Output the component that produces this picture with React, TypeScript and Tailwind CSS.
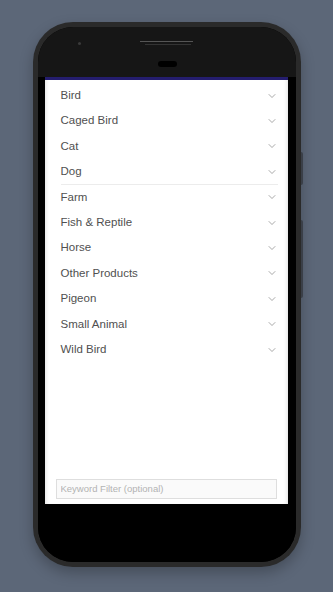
import { ChevronDown } from 'lucide-react'

const CATEGORIES = [
  'Bird',
  'Caged Bird',
  'Cat',
  'Dog',
  'Farm',
  'Fish & Reptile',
  'Horse',
  'Other Products',
  'Pigeon',
  'Small Animal',
  'Wild Bird',
]

function CategoryRow({ label, divider }: { label: string; divider?: boolean }) {
  return (
    <div className="relative flex h-[25.4px] items-center justify-between pl-[16px] pr-[10px]">
      <span className="text-[11.5px] text-[#505050]">{label}</span>
      <ChevronDown size={12} strokeWidth={1.3} className="text-[#7a7a7a]" />
      {/* thin divider, only under one row in the shot */}
      {divider && <div className="absolute bottom-0 left-[16px] right-[10px] h-px bg-[#ececec]" />}
    </div>
  )
}

export default function App() {
  return (
    <div
      className="flex h-[592px] w-full justify-center bg-[#5c6778] pt-[22px]"
      style={{ fontFamily: '"Liberation Sans", Arial, sans-serif' }}
    >
      {/* Phone body */}
      <div className="relative h-[545px] w-[268px] rounded-[40px] bg-[#2a2a2a] p-[5px] shadow-[0_6px_14px_rgba(0,0,0,0.25)]">
        {/* side buttons */}
        <div className="absolute right-[-2px] top-[130px] h-[33px] w-[2px] rounded-r bg-[#3a3f48]" />
        <div className="absolute right-[-2px] top-[198px] h-[78px] w-[2px] rounded-r bg-[#3a3f48]" />

        <div className="flex h-full flex-col overflow-hidden rounded-[35px] bg-black">
          {/* Top bezel */}
          <div className="relative h-[50px] shrink-0 bg-[#161616]">
            <div className="absolute left-[40px] top-[15px] h-[3px] w-[3px] rounded-full bg-[#3a3a3a]" />
            <div className="absolute left-[102px] top-[14px] h-px w-[53px] bg-[#555]" />
            <div className="absolute left-[107px] top-[17px] h-px w-[46px] bg-[#333]" />
            <div className="absolute left-[120px] top-[34px] h-[6px] w-[19px] rounded-full bg-black" />
          </div>

          {/* Screen */}
          <div className="mx-[7px] mr-[8px] flex flex-1 flex-col bg-white shadow-[inset_4px_0_5px_-4px_rgba(0,0,0,0.18),inset_-4px_0_5px_-4px_rgba(0,0,0,0.18)]">
            <div className="h-[3px] bg-[#241d6e]" />
            <div className="pt-[3px]">
              {CATEGORIES.map(c => (
                <CategoryRow key={c} label={c} divider={c === 'Dog'} />
              ))}
            </div>
            <div className="flex-1" />
            <div className="px-[11px] pb-[5px]">
              <input
                placeholder="Keyword Filter (optional)"
                className="h-[20px] w-full border border-[#dedede] bg-[#fafafa] px-[4px] text-[9.5px] text-[#555] outline-none placeholder:text-[#b3b3b3]"
              />
            </div>
          </div>

          {/* Bottom bezel */}
          <div className="h-[58px] shrink-0 bg-black" />
        </div>
      </div>
    </div>
  )
}
